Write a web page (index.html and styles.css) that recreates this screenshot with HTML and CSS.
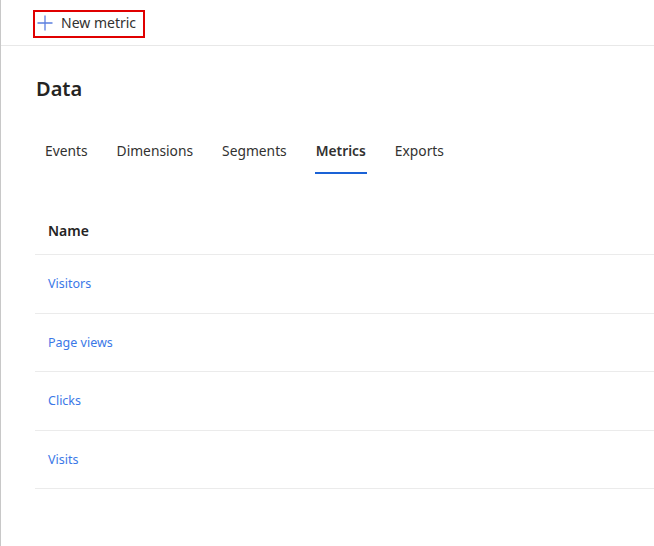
FILE: index.html
```html
<!DOCTYPE html>
<html>
<head>
<meta charset="utf-8">
<link rel="stylesheet" href="styles.css">
</head>
<body>
<div class="app">
  <div class="toolbar">
    <button class="new-btn">
      <svg class="plus" width="16" height="16" viewBox="0 0 16 16"><path d="M8 0.5V15.5M0.5 8H15.5" stroke="#5b7fe0" stroke-width="1.3" fill="none"/></svg>
      <span>New metric</span>
    </button>
  </div>
  <div class="main">
    <h1 class="title">Data</h1>
    <nav class="tabs">
      <span class="tab">Events</span>
      <span class="tab">Dimensions</span>
      <span class="tab">Segments</span>
      <span class="tab active">Metrics</span>
      <span class="tab">Exports</span>
    </nav>
    <div class="table">
      <div class="row head">Name</div>
      <div class="row"><a class="link">Visitors</a></div>
      <div class="row"><a class="link">Page views</a></div>
      <div class="row"><a class="link">Clicks</a></div>
      <div class="row"><a class="link">Visits</a></div>
    </div>
  </div>
</div>
</body>
</html>
```

FILE: styles.css
```css
html, body {
  margin: 0;
  padding: 0;
  background: #fff;
}
body {
  font-family: "Noto Sans", "Open Sans", sans-serif;
  color: #323130;
}
.app {
  width: 654px;
  height: 546px;
  box-sizing: border-box;
  border-left: 1px solid #c8c8c8;
}
.toolbar {
  height: 46px;
  box-sizing: border-box;
  border-bottom: 1px solid #e8e8e8;
  padding: 10px 0 0 32px;
}
.new-btn {
  display: flex;
  align-items: center;
  gap: 8px;
  width: 112px;
  height: 28px;
  box-sizing: border-box;
  border: 2px solid #e00000;
  background: #fff;
  padding: 0 0 3px 2px;
  font-family: inherit;
  font-size: 14px;
  color: #323130;
}
.plus { flex: none; margin-top: 1px; }
.main {
  padding: 29px 0 0 34px;
}
.title {
  margin: 0 0 0 1px;
  font-size: 20px;
  font-weight: 600;
  line-height: 28px;
  color: #252423;
}
.tabs {
  display: flex;
  gap: 9px;
  margin-top: 37px;
}
.tab {
  position: relative;
  padding: 0 10px;
  font-size: 13.8px;
  line-height: 22px;
  height: 40px;
  color: #323130;
}
.tab.active {
  font-weight: 600;
}
.tab.active::after {
  content: "";
  position: absolute;
  left: 9px;
  right: 9px;
  top: 32px;
  height: 2px;
  background: #1a62d6;
}
.table {
  margin-top: 41px;
}
.row {
  height: 57.5px;
  box-sizing: content-box;
  border-bottom: 1px solid #ebebeb;
  padding-left: 13px;
  display: flex;
  align-items: center;
  padding-top: 1px;
  margin-top: -1px;
}
.row.head {
  height: 33px;
  align-items: flex-start;
  font-size: 14px;
  font-weight: 600;
  color: #252423;
  line-height: 20px;
  padding-top: 0;
  margin-top: 0;
}
.link {
  font-size: 12.5px;
  color: #3b78e7;
}
```
